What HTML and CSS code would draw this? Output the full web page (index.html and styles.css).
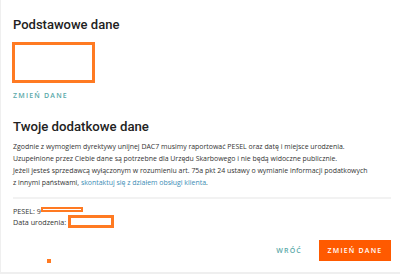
FILE: index.html
```html
<html lang="pl">
	<head>
		<meta charset="UTF-8" />
		<meta name="viewport" content="width=device-width, initial-scale=1.0" />
		<title>Podstawowe dane</title>
		<link rel="stylesheet" href="styles.css">
	</head>
	<body>
		<div class="card">
			<h2 class="title">Podstawowe dane</h2>
			<div class="redact redact-block"></div>
			<div class="link-action">ZMIEŃ DANE</div>

			<h2 class="title title-lg">Twoje dodatkowe dane</h2>
			<p class="info">
				Zgodnie z wymogiem dyrektywy unijnej DAC7 musimy raportować PESEL oraz datę i miejsce urodzenia.<br />
				Uzupełnione przez Ciebie dane są potrzebne dla Urzędu Skarbowego i nie będą widoczne publicznie.<br />
				Jeżeli jesteś sprzedawcą wyłączonym w rozumieniu art. 75a pkt 24 ustawy o wymianie informacji podatkowych<br />
				z innymi państwami, <a class="link" href="#">skontaktuj się z działem obsługi klienta</a>.
			</p>

			<hr class="sep" />

			<div class="details">
				<div class="row">PESEL: 9<span class="redact redact-bar"></span></div>
				<div class="row">Data urodzenia:<span class="redact redact-field"></span></div>
			</div>

			<div class="actions">
				<span class="dot"></span>
				<div class="link-action btn-back">WRÓĆ</div>
				<div class="button">ZMIEŃ DANE</div>
			</div>
		</div>
	</body>
</html>
```

FILE: styles.css
```css
* {
	margin: 0;
	padding: 0;
	box-sizing: border-box;
}
body {
	background-color: #fff;
	font-family: "Open Sans", "Liberation Sans", sans-serif;
	color: #333;
}

.card {
	height: 274px;
	padding: 16px 9px 0 12px;
	border-left: 1px solid #efefef;
	border-bottom: 2px solid #efefef;
}

.title {
	font-family: Roboto, "Liberation Sans", sans-serif;
	font-weight: 500;
	font-size: 13px;
	line-height: 18px;
	color: #222;
}
.title-lg {
	font-size: 13.2px;
	line-height: 20px;
	margin-top: 16px;
}

.redact {
	display: inline-block;
	border: 3px solid #ff7a22;
	background-color: #fff;
}
.redact-block {
	display: block;
	width: 83px;
	height: 41px;
	margin-top: 8px;
	margin-left: -1px;
}
.redact-bar {
	width: 42px;
	height: 5px;
	border-width: 2px;
	margin-top: -3px;
}
.redact-field {
	width: 46px;
	height: 13px;
	margin-left: 2px;
}

.link-action {
	font-size: 7px;
	line-height: 10px;
	font-weight: 600;
	letter-spacing: 1.2px;
	color: #5aa9a9;
	margin-top: 8px;
}

.info {
	margin-top: 4px;
	font-size: 6.95px;
	line-height: 12px;
	color: #333;
}
.link {
	color: #3b8db5;
	text-decoration: none;
}

.sep {
	border: none;
	border-top: 2px solid #f2f2f2;
	margin-top: 8px;
}

.details {
	margin-top: 6px;
	font-size: 7.2px;
	color: #333;
}
.row {
	display: flex;
	align-items: center;
	height: 11px;
}

.actions {
	display: flex;
	align-items: center;
	margin-top: 13px;
	gap: 17px;
}
.dot {
	width: 4px;
	height: 4px;
	background-color: #ff7a22;
	margin-left: 34px;
	margin-right: auto;
	align-self: flex-end;
	margin-bottom: -2px;
}
.btn-back {
	margin-top: 0;
}
.button {
	width: 72px;
	height: 21px;
	line-height: 21px;
	text-align: center;
	font-size: 7px;
	font-weight: 600;
	letter-spacing: 1.2px;
	color: #fff;
	background-color: #ff5a00;
	cursor: pointer;
}
```
